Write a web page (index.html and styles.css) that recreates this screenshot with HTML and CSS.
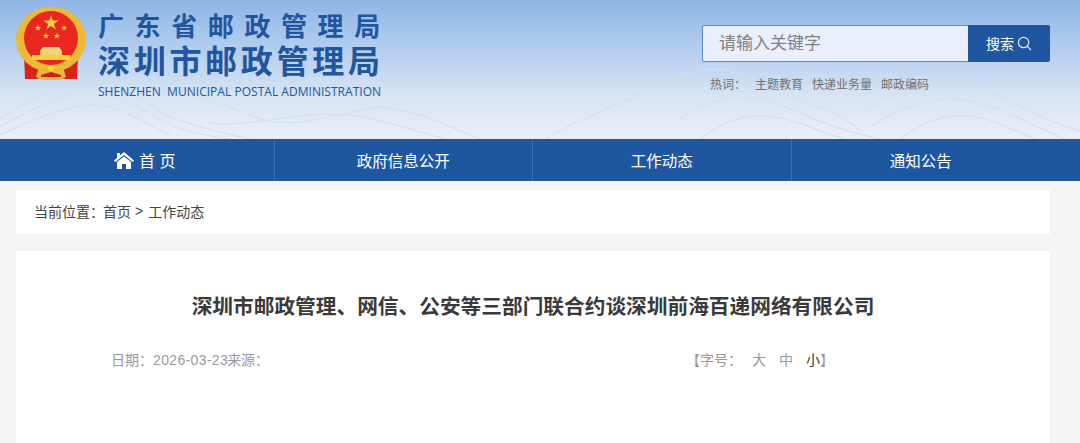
FILE: index.html
```html
<!DOCTYPE html>
<html lang="zh-CN">
<head>
<meta charset="UTF-8">
<meta name="viewport" content="width=device-width, initial-scale=1.0">
<title>深圳市邮政管理局</title>
<link rel="stylesheet" href="styles.css">
</head>
<body>

<!-- Header -->
<header class="header">
  <svg class="hills" viewBox="0 0 1080 138" preserveAspectRatio="none" aria-hidden="true">
    <g fill="none" stroke="#d3dfee" stroke-width="1">
      <path d="M0 118C30 100 55 84 82 78C110 72 140 100 170 116C200 128 225 132 250 138"/>
      <path d="M0 126C30 110 60 94 88 90C115 88 145 112 175 126C195 132 215 136 230 138"/>
      <path d="M0 134C30 120 62 106 92 104C118 104 145 122 170 134"/>
      <path d="M120 90C170 82 215 100 260 118C300 130 340 110 380 106C420 110 450 126 480 138"/>
      <path d="M210 122C260 128 310 104 372 118C405 126 430 134 445 138"/>
      <path d="M545 138C590 112 640 96 690 72C730 60 760 82 790 96C815 104 840 112 860 130"/>
      <path d="M680 118C715 94 750 88 790 108C825 124 850 132 880 138"/>
      <path d="M700 138C735 110 770 110 810 126C825 132 835 135 845 138"/>
      <path d="M860 112C895 90 930 76 965 84C1000 92 1035 118 1080 130"/>
      <path d="M870 126C905 104 935 94 970 100C1005 108 1035 126 1065 138"/>
      <path d="M900 138C930 116 955 110 985 118C1005 124 1020 132 1035 138"/>
    </g>
  </svg>
  <div class="header-inner">
    <a class="logo" href="#">
      <svg class="emblem" viewBox="0 0 70 74" aria-hidden="true">
        <defs>
          <polygon id="star" points="0,-1 .225,-.309 .951,-.309 .363,.118 .588,.809 0,.382 -.588,.809 -.363,.118 -.951,-.309 -.225,-.309"/>
        </defs>
        <path d="M8 48L9 72H22L30 68V56Z" fill="#d8241c"/>
        <path d="M62 48L61 72H48L40 68V56Z" fill="#d8241c"/>
        <ellipse cx="35" cy="32.500" rx="35" ry="32.500" fill="#eeba35"/>
        <circle cx="35" cy="31" r="27" fill="#e8281e"/>
        <g fill="#f8d040">
          <use href="#star" transform="translate(35 16) scale(8)"/>
          <use href="#star" transform="translate(22 21) scale(3.500)"/>
          <use href="#star" transform="translate(48 21) scale(3.500)"/>
          <use href="#star" transform="translate(30 29) scale(3.500)"/>
          <use href="#star" transform="translate(41 29) scale(3.500)"/>
        </g>
        <path d="M24 48V44L27 40H43L46 44V48Z" fill="#f4d27a"/>
        <rect x="16" y="48" width="38" height="5" fill="#f6cf3f"/>
        <path d="M23 60C27 62 31 60 35 63C39 60 43 62 47 60L50 70L44 73H26L20 70Z" fill="#eeba35"/>
        <path d="M25 68L35 65L45 68V70H25Z" fill="#cf2019"/>
        <circle cx="35" cy="61" r="3" fill="#f6d24e"/>
      </svg>
      <div class="logo-text">
        <div class="logo-top">广东省邮政管理局</div>
        <div class="logo-main">深圳市邮政管理局</div>
        <div class="logo-en">SHENZHEN&nbsp; MUNICIPAL POSTAL ADMINISTRATION</div>
      </div>
    </a>
    <div class="search-wrap">
      <form class="search">
        <input class="search-input" type="text" placeholder="请输入关键字">
        <button class="search-btn" type="button">搜索
          <svg viewBox="0 0 16 16" aria-hidden="true"><circle cx="7" cy="7" r="5.500"/><path d="M11 11l4 4"/></svg>
        </button>
      </form>
      <div class="hot">
        <span class="hot-label">热词&#65306;</span>
        <a href="#">主题教育</a>
        <a href="#">快递业务量</a>
        <a href="#">邮政编码</a>
      </div>
    </div>
  </div>
</header>

<!-- Nav -->
<nav class="nav">
  <ul class="nav-list">
    <li>
      <a href="#">
        <svg class="home" viewBox="0 0 20 17" aria-hidden="true">
          <path d="M10 0L20 8.500 18.700 10 10 3 1.300 10 0 8.500 3 6V1H6V3.500Z"/>
          <path d="M10 4.500L17 10V17H12V12H8V17H3V10Z"/>
        </svg>
        <span class="home-text">首 页</span>
      </a>
    </li>
    <li><a href="#">政府信息公开</a></li>
    <li><a href="#">工作动态</a></li>
    <li><a href="#">通知公告</a></li>
  </ul>
</nav>

<main class="main">
  <div class="crumb">当前位置&#65306;<a class="crumb-first" href="#">首页</a><span class="sep">&gt;</span><a href="#">工作动态</a></div>

  <article class="article">
    <h1>深圳市邮政管理、网信、公安等三部门联合约谈深圳前海百递网络有限公司</h1>
    <div class="meta">
      <div class="meta-left">日期&#65306;<span class="date">2026-03-23</span>来源&#65306;</div>
      <div class="meta-right">
        <span class="size-label">【字号&#65306;</span>
        <a href="#">大</a>
        <a href="#">中</a>
        <a class="on" href="#">小</a><span class="close">】</span>
      </div>
    </div>
  </article>
</main>

</body>
</html>
```

FILE: styles.css
```css
/* Reset */
* {
  margin: 0;
  padding: 0;
  box-sizing: border-box;
}
html, body {
  height: 100%;
  overflow: hidden;
}
body {
  font-family: "Liberation Sans", "Noto Sans CJK SC", sans-serif;
  background: #f5f5f5;
  color: #333;
}
a {
  color: inherit;
  text-decoration: none;
}
ul {
  list-style: none;
}

/* Header */
.header {
  position: relative;
  height: 139px;
  background: linear-gradient(#8fb5e6 0%, #b3cdee 35%, #d9e5f4 70%, #e9eff8 100%);
  overflow: hidden;
}
.hills {
  position: absolute;
  left: 0;
  top: 0;
  width: 100%;
  height: 100%;
}
.header-inner {
  position: relative;
  display: flex;
  justify-content: space-between;
  padding: 7px 30px 0 16px;
}
.logo {
  display: flex;
  gap: 12px;
}
.emblem {
  width: 70px;
  height: 74px;
  flex: none;
}
.logo-text {
  color: #21569f;
  font-weight: 700;
  white-space: nowrap;
}
.logo-top {
  font-size: 26px;
  line-height: 30px;
  letter-spacing: 10.600px;
  margin-top: 5px;
}
.logo-main {
  font-size: 32px;
  line-height: 38px;
  letter-spacing: 3.700px;
  margin-top: 1px;
}
.logo-en {
  font-family: "Open Sans", sans-serif;
  font-weight: 400;
  font-size: 12px;
  line-height: 16px;
  letter-spacing: .03px;
  margin-top: 3px;
}

/* Search */
.search-wrap {
  width: 348px;
  padding-top: 18px;
}
.search {
  display: flex;
  height: 37px;
}
.search-input {
  flex: 1;
  min-width: 0;
  height: 100%;
  padding: 0 0 4px 16px;
  font: 17px "Noto Sans CJK SC", sans-serif;
  background: #e9f0fb;
  border: 1px solid #5f8bc4;
  border-right: 0;
  border-radius: 2px 0 0 2px;
  outline: none;
}
.search-input::placeholder {
  color: #808080;
  opacity: 1;
}
.search-btn {
  width: 82px;
  display: flex;
  align-items: center;
  justify-content: center;
  gap: 3px;
  padding-bottom: 1px;
  font: 14px "Liberation Sans", "Noto Sans CJK SC", sans-serif;
  color: #fff;
  background: #1f56a0;
  border: 0;
  border-radius: 0 2px 2px 0;
}
.search-btn svg {
  width: 15px;
  height: 15px;
  fill: none;
  stroke: #dfe9f6;
  stroke-width: 1.300;
}
.hot {
  display: flex;
  gap: 9px;
  padding: 14px 0 0 8px;
  font-size: 12px;
  line-height: 18px;
  color: #707070;
}
.hot-label {
  width: 36px;
}

/* Nav */
.nav {
  height: 42px;
  background: #1f56a0;
}
.nav-list {
  display: grid;
  grid-template-columns: repeat(4, 1fr);
  margin: 0 30px 0 16px;
  height: 100%;
}
.nav-list li {
  border-right: 1px solid #3d6fb1;
}
.nav-list li:last-child {
  border-right: 0;
}
.nav-list a {
  display: flex;
  align-items: center;
  justify-content: center;
  height: 100%;
  font-size: 15.500px;
  color: #fff;
}
.home {
  width: 20px;
  height: 17px;
  fill: #fff;
  margin-right: 5px;
}
.home-text {
  font-size: 16px;
}

/* Breadcrumb */
.main {
  padding: 9px 30px 0 16px;
}
.crumb {
  height: 44px;
  padding: 0 0 2px 18px;
  display: flex;
  align-items: center;
  background: #fff;
  font-size: 14px;
  color: #444;
}
.crumb-first {
  margin-left: -1px;
}
.crumb .sep {
  margin: 0 5px 0 4px;
}

/* Article */
.article {
  margin-top: 17px;
  min-height: 300px;
  padding-top: 38px;
  background: #fff;
}
.article h1 {
  font-size: 20.700px;
  line-height: 36px;
  font-weight: 700;
  text-align: center;
  color: #3a3a3a;
  white-space: nowrap;
}
.meta {
  display: flex;
  margin-top: 25px;
  padding-left: 95px;
  font-size: 14px;
  line-height: 20px;
  color: #999;
}
.meta-left {
  width: 575px;
}
.date {
  margin-right: -1px;
  letter-spacing: .35px;
}
.meta-right {
  display: flex;
}
.size-label {
  width: 66px;
}
.meta-right a {
  width: 27px;
}
.meta-right .on {
  width: 14px;
  color: #333;
}
.close {
  color: #999;
}
```
